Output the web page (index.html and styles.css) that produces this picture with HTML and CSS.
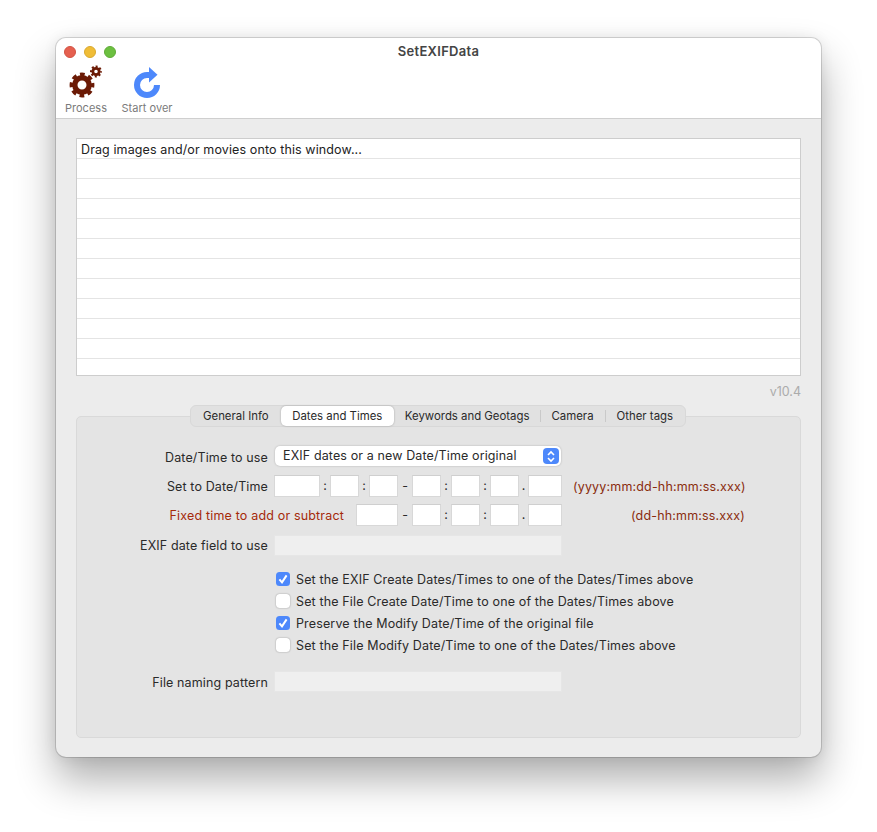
FILE: index.html
```html
<!DOCTYPE html>
<html lang="en">
<head>
<meta charset="utf-8">
<title>SetEXIFData</title>
<link rel="stylesheet" href="styles.css">
</head>
<body>
<div class="window">
  <header class="toolbar">
    <div class="titlebar">
      <div class="lights"><span class="light red"></span><span class="light yellow"></span><span class="light green"></span></div>
      <div class="title">SetEXIFData</div>
    </div>
    <div class="tools">
      <div class="tool tool-process">
        <svg class="tool-icon" width="44" height="34" viewBox="0 0 44 34">
          <g fill="none" stroke="#6b1a05">
            <circle cx="18" cy="20" r="7.2" stroke-width="5.4"/>
            <circle cx="18" cy="20" r="10.4" stroke-width="4" stroke-dasharray="4.6 3.57" stroke-dashoffset="2.3"/>
            <circle cx="32" cy="6.5" r="3.2" stroke-width="2.8"/>
            <circle cx="32" cy="6.5" r="5" stroke-width="2" stroke-dasharray="2 1.93" stroke-dashoffset="1"/>
          </g>
        </svg>
        <span class="tool-label">Process</span>
      </div>
      <div class="tool tool-start">
        <svg class="tool-icon" width="34" height="34" viewBox="0 0 34 34">
          <path d="M20 9 H17 A10 10 0 1 0 27 19" fill="none" stroke="#4d88fb" stroke-width="6"/>
          <path d="M19 1 L27.5 8.7 L19 16.5 Z" fill="#4d88fb"/>
        </svg>
        <span class="tool-label">Start over</span>
      </div>
    </div>
  </header>
  <main class="content">
    <div class="list">
      <div class="list-row">Drag images and/or movies onto this window...</div>
      <div class="list-row"></div><div class="list-row"></div><div class="list-row"></div>
      <div class="list-row"></div><div class="list-row"></div><div class="list-row"></div>
      <div class="list-row"></div><div class="list-row"></div><div class="list-row"></div>
      <div class="list-row"></div><div class="list-row list-last"></div>
    </div>
    <div class="version">v10.4</div>
    <section class="tabview">
      <nav class="tabs">
        <span class="tab tab-first">General Info</span>
        <span class="tab tab-active">Dates and Times</span>
        <span class="tab tab-keywords">Keywords and Geotags</span>
        <span class="sep"></span>
        <span class="tab">Camera</span>
        <span class="sep"></span>
        <span class="tab tab-last">Other tags</span>
      </nav>
      <div class="panel">
        <div class="row row-select">
          <label class="label">Date/Time to use</label>
          <div class="select">
            <span class="select-text">EXIF dates or a new Date/Time original</span>
            <span class="stepper">
              <svg width="10" height="13" viewBox="0 0 10 13"><path d="M2 5 L5 2 L8 5 M2 8 L5 11 L8 8" fill="none" stroke="#fff" stroke-width="1.6"/></svg>
            </span>
          </div>
        </div>
        <div class="row row-date">
          <label class="label">Set to Date/Time</label>
          <div class="field f-year"></div><span class="punct p-colon">:</span>
          <div class="field f-s"></div><span class="punct p-colon">:</span>
          <div class="field f-s"></div><span class="punct p-dash">-</span>
          <div class="field f-s"></div><span class="punct p-colon">:</span>
          <div class="field f-s"></div><span class="punct p-colon">:</span>
          <div class="field f-s"></div><span class="punct p-dot">.</span>
          <div class="field f-ms"></div>
          <span class="hint hint-long">(yyyy:mm:dd-hh:mm:ss.xxx)</span>
        </div>
        <div class="row row-fixed">
          <label class="label label-red">Fixed time to add or subtract</label>
          <div class="field f-day"></div><span class="punct p-dash">-</span>
          <div class="field f-s"></div><span class="punct p-colon">:</span>
          <div class="field f-s"></div><span class="punct p-colon">:</span>
          <div class="field f-s"></div><span class="punct p-dot">.</span>
          <div class="field f-ms"></div>
          <span class="hint hint-short">(dd-hh:mm:ss.xxx)</span>
        </div>
        <div class="row row-exif">
          <label class="label">EXIF date field to use</label>
          <div class="field field-disabled"></div>
        </div>
        <div class="checks">
          <div class="check"><span class="box box-on"><svg width="14" height="14" viewBox="0 0 14 14"><path d="M3.4 7.4 L6 10.4 L10.6 3.4" fill="none" stroke="#fff" stroke-width="2"/></svg></span>Set the EXIF Create Dates/Times to one of the Dates/Times above</div>
          <div class="check"><span class="box"></span>Set the File Create Date/Time to one of the Dates/Times above</div>
          <div class="check"><span class="box box-on"><svg width="14" height="14" viewBox="0 0 14 14"><path d="M3.4 7.4 L6 10.4 L10.6 3.4" fill="none" stroke="#fff" stroke-width="2"/></svg></span>Preserve the Modify Date/Time of the original file</div>
          <div class="check"><span class="box"></span>Set the File Modify Date/Time to one of the Dates/Times above</div>
        </div>
        <div class="row row-pattern">
          <label class="label">File naming pattern</label>
          <div class="field field-disabled"></div>
        </div>
      </div>
    </section>
  </main>
</div>
</body>
</html>
```
FILE: styles.css
```css
* { box-sizing: border-box; }
html, body { margin: 0; height: 100%; background: #fff; }
body {
  padding: 38px 56px 0;
  font-family: Inter, "Liberation Sans", sans-serif;
  font-size: 12.5px;
  color: #2a2a2a;
  overflow: hidden;
}
.window {
  width: 765px;
  height: 719px;
  border-radius: 10px;
  background: #ececec;
  box-shadow: 0 0 0 1px rgba(0,0,0,.14), 0 22px 40px rgba(0,0,0,.32), 0 0 14px rgba(0,0,0,.08);
  overflow: hidden;
}
.toolbar {
  height: 81px;
  background: #fff;
  border-bottom: 1px solid #cfcfcf;
}
.titlebar { position: relative; height: 26px; display: flex; justify-content: center; align-items: center; }
.lights { position: absolute; left: 8px; top: 8px; display: flex; gap: 8px; }
.light { width: 12px; height: 12px; border-radius: 50%; }
.red { background: #e5604f; border: 1px solid #d25344; }
.yellow { background: #f0bd37; border: 1px solid #d9a92f; }
.green { background: #6cc040; border: 1px solid #60ab38; }
.title { font-size: 13px; font-weight: 600; color: #444; letter-spacing: .3px; }
.tools { display: flex; }
.tool { display: flex; flex-direction: column; align-items: center; font-size: 11px; color: #7b7b7b; letter-spacing: .03px; }
.tool-process { width: 44px; margin-left: 8px; }
.tool-start { width: 56px; margin-left: 11px; margin-top: 2px; }
.tool-icon { display: block; flex: none; }
.tool-process .tool-icon { margin-top: 1px; margin-bottom: 3px; }
.tool-start .tool-icon { margin-bottom: 2px; }
.tool-label { white-space: nowrap; line-height: 13px; }
.content { padding: 19px 20px 0; }
.list {
  height: 238px;
  background: #fff;
  border: 1px solid #cdcdcd;
  overflow: hidden;
}
.list-row {
  height: 20px;
  border-bottom: 1px solid #e4e4e4;
  padding-left: 4px;
  line-height: 21px;
  font-size: 12.5px;
  letter-spacing: .11px;
  color: #222;
}
.list-last { border-bottom: 0; }
.version { text-align: right; color: #ababab; font-size: 12.5px; margin-top: 8px; line-height: 16px; }
.tabview { position: relative; margin-top: 17px; }
.panel {
  height: 322px;
  margin-top: -1px;
  border: 1px solid #d9d9d9;
  border-radius: 5px;
  background: #e4e4e4;
  padding-top: 29px;
}
.tabs {
  position: absolute;
  left: 114px;
  top: -11px;
  z-index: 1;
  height: 22px;
  display: flex;
  align-items: center;
  background: #e1e1e1;
  border: 1px solid #d8d8d8;
  border-radius: 6px;
  font-size: 11.4px;
  color: #2a2a2a;
}
.tab { padding: 0 11px; white-space: nowrap; line-height: 20px; }
.tab-first { padding: 0 12px; }
.tab-keywords { padding-right: 10px; }
.tab-last { padding-right: 12px; }
.tab-active {
  background: #fff;
  border-radius: 5px;
  box-shadow: 0 0 2px rgba(0,0,0,.3);
  height: 20px;
  padding: 0 11.5px;
}
.sep { width: 1px; height: 12px; background: #c9c9c9; }
.row { display: flex; align-items: center; }
.label { width: 191px; flex: none; text-align: right; margin-right: 6px; white-space: nowrap; letter-spacing: .13px; }
.label-red { color: #a52a0a; width: 267px; margin-right: 12px; letter-spacing: .17px; }
.row-select { height: 20px; }
.row-select .label { padding-top: 2px; }
.row-date { height: 22px; margin-top: 9px; }
.row-fixed { height: 22px; margin-top: 7px; }
.row-exif { height: 21px; margin-top: 9px; }
.select {
  width: 286px;
  height: 20px;
  margin-left: 1px;
  background: #fff;
  border-radius: 5px;
  box-shadow: 0 0 2px rgba(0,0,0,.25);
  display: flex;
  align-items: center;
  justify-content: space-between;
  padding: 0 2px 0 8px;
  letter-spacing: .12px;
}
.select-text { padding-bottom: 1px; }
.stepper {
  width: 16px;
  height: 16px;
  border-radius: 4px;
  background: #4d88fb;
  display: flex;
  align-items: center;
  justify-content: center;
}
.field { height: 22px; background: #fff; border: 1px solid #d8d8d8; border-top-color: #cfcfcf; flex: none; }
.f-year { width: 46px; }
.f-s { width: 29px; }
.f-day { width: 42px; }
.f-ms { width: 34px; }
.punct { flex: none; text-align: center; line-height: 22px; }
.p-colon { width: 10px; }
.p-dash { width: 14px; }
.p-dot { width: 9px; }
.field-disabled { width: 288px; height: 21px; background: #efefef; border-color: #e6e6e6; }
.hint { color: #8a2c0e; flex: none; white-space: nowrap; letter-spacing: .17px; }
.hint-long { margin-left: 11px; }
.hint-short { margin-left: 69px; }
.checks { margin-top: 12px; margin-left: 199px; }
.check { height: 22px; display: flex; align-items: center; white-space: nowrap; letter-spacing: .14px; }
.box {
  width: 14px;
  height: 14px;
  border-radius: 3.5px;
  background: #fff;
  box-shadow: 0 0 1.5px rgba(0,0,0,.45);
  margin-right: 6px;
  flex: none;
  display: block;
}
.box svg { display: block; }
.box-on { background: #4d88fb; box-shadow: none; }
.row-pattern { height: 21px; margin-top: 15px; }
.row-pattern .label { padding-top: 2px; }
```
